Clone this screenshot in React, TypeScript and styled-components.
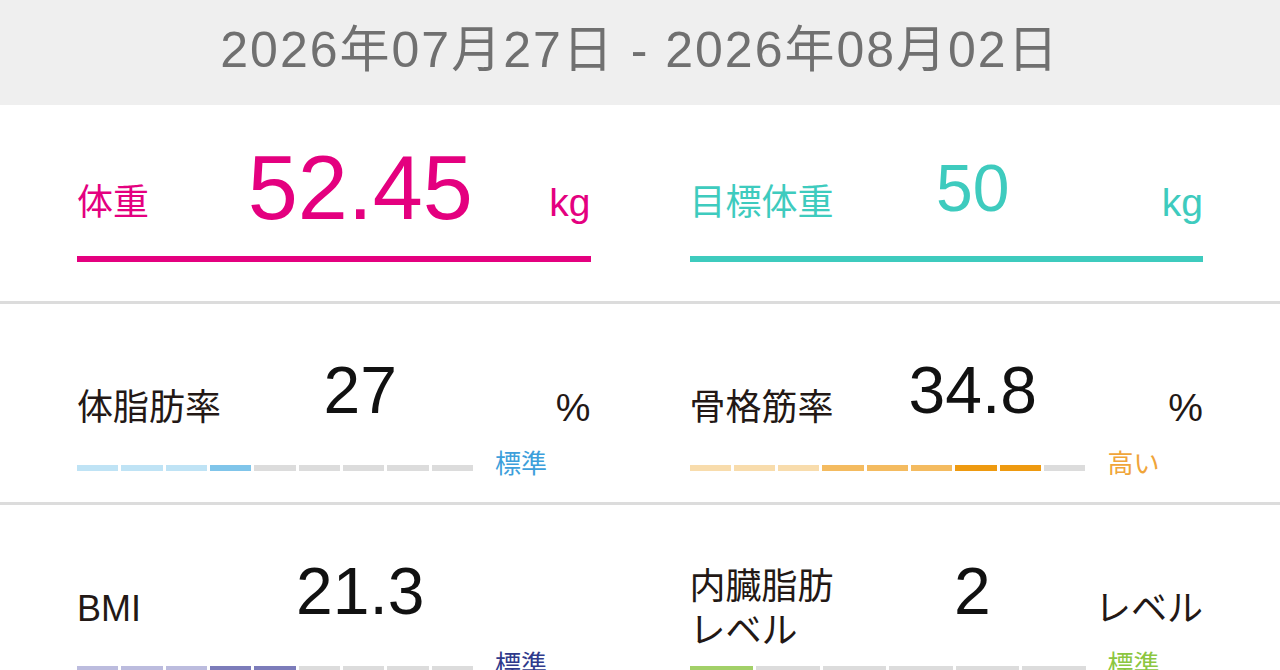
import React from 'react'
import styled, { createGlobalStyle } from 'styled-components'

const GlobalStyle = createGlobalStyle`
    html, body {
        margin: 0;
        padding: 0;
        overflow: hidden;
        background: #ffffff;
    }
    body {
        font-family: "Liberation Sans", "Noto Sans CJK JP", sans-serif;
    }
`

interface Metric {
    label: React.ReactNode
    value: string
    unit: string
    status: string
    statusColor: string
    segments: string[]
}

const GRAY = '#dcdcdc'

const blue = { l: '#bfe3f5', a: '#80c5ea' }
const orange = { l: '#f8dcac', m: '#f4bb60', d: '#ee9a10' }
const purple = { l: '#bcbcde', d: '#7c7cba' }

const rows: Metric[][] = [
    [
        {
            label: '体脂肪率',
            value: '27',
            unit: '%',
            status: '標準',
            statusColor: '#3d9fdb',
            segments: [blue.l, blue.l, blue.l, blue.a, GRAY, GRAY, GRAY, GRAY, GRAY],
        },
        {
            label: '骨格筋率',
            value: '34.8',
            unit: '%',
            status: '高い',
            statusColor: '#f0a53a',
            segments: [orange.l, orange.l, orange.l, orange.m, orange.m, orange.m, orange.d, orange.d, GRAY],
        },
    ],
    [
        {
            label: 'BMI',
            value: '21.3',
            unit: '',
            status: '標準',
            statusColor: '#2f3a8c',
            segments: [purple.l, purple.l, purple.l, purple.d, purple.d, GRAY, GRAY, GRAY, GRAY],
        },
        {
            label: (
                <>
                    内臓脂肪
                    <br />
                    レベル
                </>
            ),
            value: '2',
            unit: 'レベル',
            status: '標準',
            statusColor: '#8cc63f',
            segments: ['#a2d068', GRAY, GRAY, GRAY, GRAY, GRAY],
        },
    ],
]

const App: React.FC = () => {
    return (
        <Page>
            <GlobalStyle />
            <DateHeader>2026年07月27日 - 2026年08月02日</DateHeader>

            <WeightSection>
                <Card>
                    <Row>
                        <Label color="#e4007f">体重</Label>
                        <BigValue color="#e4007f" size={90}>52.45</BigValue>
                        <Unit color="#e4007f" latin>kg</Unit>
                    </Row>
                    <Underline color="#e4007f" />
                </Card>
                <Card>
                    <Row>
                        <Label color="#3ecbbe">目標体重</Label>
                        <BigValue color="#3ecbbe" size={66}>50</BigValue>
                        <Unit color="#3ecbbe" latin>kg</Unit>
                    </Row>
                    <Underline color="#3ecbbe" />
                </Card>
            </WeightSection>

            {rows.map((row, i) => (
                <MetricSection key={i}>
                    {row.map((m, j) => (
                        <Card key={j}>
                            <Row>
                                <Label color="#231815">{m.label}</Label>
                                <Value>{m.value}</Value>
                                <Unit color="#231815" latin={m.unit === '%'}>{m.unit}</Unit>
                            </Row>
                            <GaugeRow>
                                <Track>
                                    {m.segments.map((c, k) => (
                                        <Segment key={k} color={c} />
                                    ))}
                                </Track>
                                <Status color={m.statusColor}>{m.status}</Status>
                            </GaugeRow>
                        </Card>
                    ))}
                </MetricSection>
            ))}
        </Page>
    )
}

const Page = styled.div`
    width: 1280px;
    height: 670px;
    overflow: hidden;
    background: #ffffff;
`
const DateHeader = styled.div`
    height: 105px;
    box-sizing: border-box;
    padding-bottom: 6px;
    display: flex;
    align-items: center;
    justify-content: center;
    background: #efefef;
    color: #707070;
    font-size: 50px;
    line-height: 1;
    letter-spacing: 2px;
    white-space: nowrap;
`
const Section = styled.div`
    display: grid;
    grid-template-columns: 1fr 1fr;
    column-gap: 99px;
    padding: 0 77px;
    border-bottom: 3px solid #dcdcdc;
`
const WeightSection = styled(Section)`
    padding-top: 58px;
    padding-bottom: 39px;
`
const MetricSection = styled(Section)`
    padding-top: 64px;
    padding-bottom: 21px;
`
const Card = styled.div`
    display: flex;
    flex-direction: column;
    min-width: 0;
`
const Row = styled.div`
    display: flex;
    align-items: center;
    height: 80px;
`
const Label = styled.div<{ color: string }>`
    flex: 0 0 160px;
    font-size: 36px;
    line-height: 44px;
    color: ${p => p.color};
    white-space: nowrap;
`
const BigValue = styled.div<{ color: string; size: number }>`
    flex: 1;
    display: flex;
    justify-content: center;
    font-size: ${p => p.size}px;
    line-height: 1;
    margin-bottom: 30px;
    color: ${p => p.color};
    white-space: nowrap;
`
const Value = styled.div`
    flex: 1;
    display: flex;
    justify-content: center;
    font-size: 66px;
    line-height: 1;
    margin-bottom: 36px;
    color: #111111;
    white-space: nowrap;
`
const Unit = styled.div<{ color: string; latin?: boolean }>`
    flex: 0 0 107px;
    display: flex;
    justify-content: flex-end;
    font-size: ${p => (p.latin ? 39 : 36)}px;
    line-height: 44px;
    color: ${p => p.color};
    white-space: nowrap;
`
const Underline = styled.div<{ color: string }>`
    height: 6px;
    margin-top: 13px;
    background: ${p => p.color};
`
const GaugeRow = styled.div`
    display: flex;
    align-items: center;
    height: 26px;
    margin-top: 7px;
`
const Track = styled.div`
    display: flex;
    gap: 3px;
    flex: 0 0 396px;
`
const Segment = styled.div<{ color: string }>`
    flex: 1;
    height: 6px;
    background: ${p => p.color};
`
const Status = styled.div<{ color: string }>`
    margin-left: 22px;
    margin-bottom: 8px;
    font-size: 26px;
    line-height: 26px;
    color: ${p => p.color};
    white-space: nowrap;
`

export default App
